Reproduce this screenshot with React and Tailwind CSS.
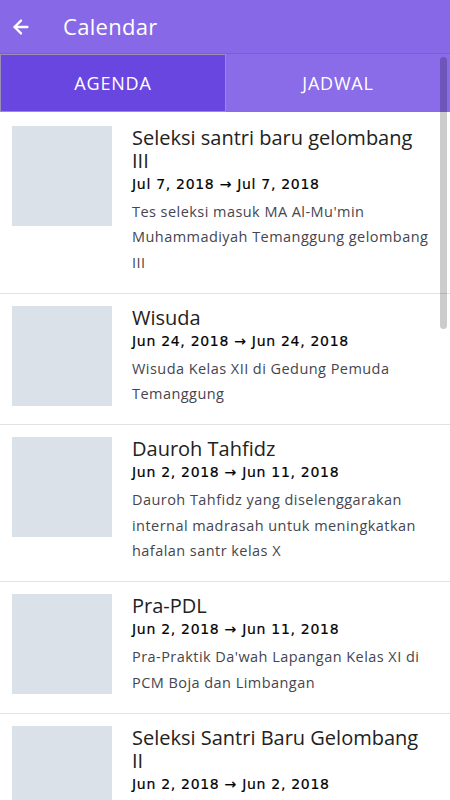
import React from "react";
import { ArrowLeft } from "lucide-react";

const events = [
  {
    title: "Seleksi santri baru gelombang III",
    date: "Jul 7, 2018 → Jul 7, 2018",
    desc: "Tes seleksi masuk MA Al-Mu'min Muhammadiyah Temanggung gelombang III",
  },
  {
    title: "Wisuda",
    date: "Jun 24, 2018 → Jun 24, 2018",
    desc: "Wisuda Kelas XII di Gedung Pemuda Temanggung",
  },
  {
    title: "Dauroh Tahfidz",
    date: "Jun 2, 2018 → Jun 11, 2018",
    desc: "Dauroh Tahfidz yang diselenggarakan internal madrasah untuk meningkatkan hafalan santr kelas X",
  },
  {
    title: "Pra-PDL",
    date: "Jun 2, 2018 → Jun 11, 2018",
    desc: "Pra-Praktik Da'wah Lapangan Kelas XI di PCM Boja dan Limbangan",
  },
  {
    title: "Seleksi Santri Baru Gelombang II",
    date: "Jun 2, 2018 → Jun 2, 2018",
    desc: "Tes seleksi masuk MA Al-Mu'min Muhammadiyah Temanggung gelombang II",
  },
];

const EventRow = ({ title, date, desc }) => (
  <div className="flex gap-5 border-b border-[#e2e2e2] pl-3 pr-4 pt-3 pb-[18px]">
    <div className="w-[100px] h-[100px] shrink-0 bg-[#dbe1e8]" />
    <div className="flex-1 min-w-0">
      <p className="text-[20px] leading-[23px] text-[#222]">{title}</p>
      <p className="font-['DejaVu_Sans',sans-serif] text-[14px] leading-[24px] tracking-[0.7px] text-black [-webkit-text-stroke:0.2px_black]">
        {date}
      </p>
      <p className="mt-[3px] text-[14.5px] leading-[25.3px] tracking-[0.45px] text-[#45454f]">{desc}</p>
    </div>
  </div>
);

export default function App() {
  return (
    <div className="relative w-[450px] h-[800px] overflow-hidden bg-white font-['Open_Sans',sans-serif]">
      {/* header */}
      <div className="h-[54px] flex items-center bg-[#8769e7] border-b border-[#7a5ce2] text-white">
        <ArrowLeft className="ml-[10px] w-[22px] h-[22px]" strokeWidth={2.5} />
        <h1 className="ml-[31px] text-[22px] font-normal tracking-[0.3px]">Calendar</h1>
      </div>

      {/* tabs */}
      <div className="flex h-[58px] bg-[#8a6be8] text-white text-[18px] tracking-[0.8px]">
        <div className="flex-1 flex items-center justify-center bg-[#6a46e0] border border-[#9a8fb8]">
          AGENDA
        </div>
        <div className="flex-1 flex items-center justify-center">JADWAL</div>
      </div>

      {/* list */}
      <div className="pt-[2px]">
        {events.map((e) => (
          <EventRow key={e.title} {...e} />
        ))}
      </div>

      {/* scrollbar overlay */}
      <div className="absolute left-[440px] top-[57px] w-[7px] h-[272px] rounded-full bg-black/20" />
    </div>
  );
}
